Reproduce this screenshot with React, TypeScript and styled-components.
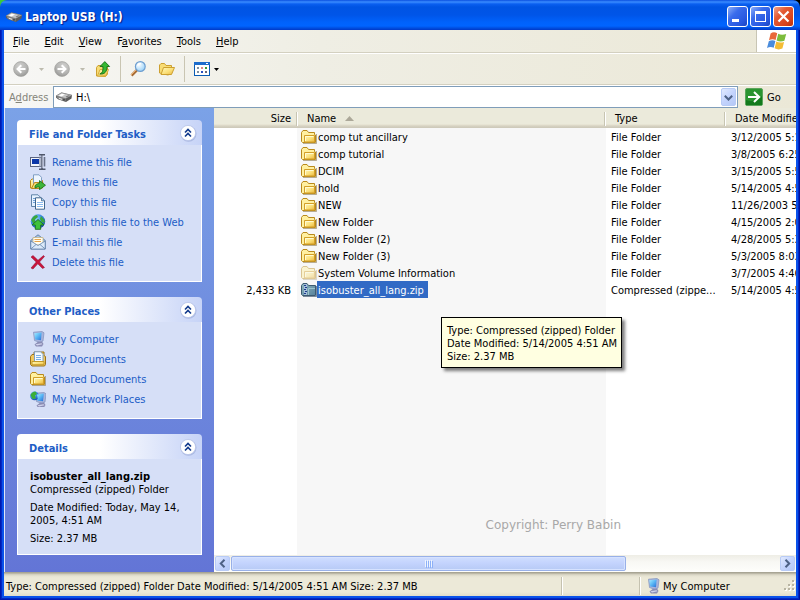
import React from 'react';
import styled, { createGlobalStyle, css } from 'styled-components';

const GlobalStyle = createGlobalStyle`
  * { box-sizing: border-box; }
  html, body { margin: 0; padding: 0; }
  body {
    background: linear-gradient(90deg, #3cc83c 50%, #000 50%);
    font-family: "DejaVu Sans Condensed", "DejaVu Sans", Tahoma, sans-serif;
    font-size: 11px;
    line-height: 13px;
    color: #000;
    overflow: hidden;
  }
  button, input { font: inherit; color: inherit; margin: 0; padding: 0; border: 0; background: none; }
  button { display: flex; align-items: center; justify-content: center; }
  a { text-decoration: none; }
  svg { display: block; flex: none; }
  p, h1, h2, ul { margin: 0; padding: 0; }
`;

/* ---------- Icons ---------- */

const DefsSvg = styled.svg`
  position: absolute;
`;

const Defs = () => (
  <DefsSvg width="0" height="0" aria-hidden="true">
    <defs>
      <linearGradient id="gFolder" x1="0" y1="0" x2="1" y2="1">
        <stop offset="0" stopColor="#fff8b8" />
        <stop offset=".55" stopColor="#fbe07a" />
        <stop offset="1" stopColor="#e9b53c" />
      </linearGradient>
      <linearGradient id="gZip" x1="0" y1="0" x2="1" y2="1">
        <stop offset="0" stopColor="#8fb8c0" />
        <stop offset="1" stopColor="#56809a" />
      </linearGradient>
      <linearGradient id="gScreen" x1="0" y1="0" x2="1" y2="1">
        <stop offset="0" stopColor="#a6ecff" />
        <stop offset=".5" stopColor="#58b6f4" />
        <stop offset="1" stopColor="#2a6fd8" />
      </linearGradient>
      <radialGradient id="gNav" cx=".4" cy=".3" r=".8">
        <stop offset="0" stopColor="#d0d0ce" />
        <stop offset=".6" stopColor="#b4b4b2" />
        <stop offset="1" stopColor="#8f8f8d" />
      </radialGradient>
      <radialGradient id="gGlobe" cx=".35" cy=".3" r=".8">
        <stop offset="0" stopColor="#8fd4ff" />
        <stop offset=".6" stopColor="#2f7fe0" />
        <stop offset="1" stopColor="#143c9c" />
      </radialGradient>
      <radialGradient id="gLens" cx=".35" cy=".3" r=".8">
        <stop offset="0" stopColor="#fff" />
        <stop offset="1" stopColor="#8fcdf8" />
      </radialGradient>
    </defs>
  </DefsSvg>
);

const Icon = ({ size = 16, children }: { size?: number; children: React.ReactNode }) => (
  <svg width={size} height={size} viewBox="0 0 16 16" aria-hidden="true">{children}</svg>
);

const DriveIcon = () => (
  <Icon>
    <path d="M0 6.8 L5.5 3.5 L16 6 L15.5 9.5 L10 13 L2 10.3 L0 8.5Z" fill="#5c5c5c" />
    <path d="M0.3 6.8 L5.5 3.8 L15.6 6.2 L9.5 9.4Z" fill="#c6c6c6" stroke="#8a8a8a" strokeWidth=".5" />
    <path d="M0.5 7.3 L9.5 10 V12.4 L2 10Z" fill="#8a8a8a" />
    <path d="M2.5 6.6 L6 4.8 L9 5.6 L5.5 7.6Z" fill="#fff" />
    <path d="M9.5 7.6 L12.5 6.2 L14 6.6 L11 8.2Z" fill="#787878" />
    <path d="M3 9.3 L6 10.3" stroke="#e8e8e8" />
    <rect x="7" y="10.4" width="2" height="1" fill="#2a2a2a" />
  </Icon>
);

const FolderShape = () => (
  <>
    <path d="M2 14.5 H15.5 V5" fill="none" stroke="#8c7a50" strokeOpacity=".6" />
    <path d="M.5 12.5 V3.5 L2 1.5 H6 L7.5 3.5 H13.5 V5.5 L14.5 6 V13.5 H1.5Z" fill="#fff0a0" stroke="#b98a1c" />
    <path d="M3.5 13 V6.5 H13.5 V13Z" fill="url(#gFolder)" stroke="#d39f28" />
    <path d="M4.5 12 V7.5 H12.5" fill="none" stroke="#fffbd0" />
  </>
);
const FolderIcon = ({ faded }: { faded?: boolean }) => (
  <Icon><g opacity={faded ? 0.45 : 1}><FolderShape /></g></Icon>
);

const ZipIcon = () => (
  <Icon>
    <path d="M15.5 4 V14.5 H2" fill="none" stroke="#25405c" strokeOpacity=".6" />
    <path d="M.5 12.5 V3.5 L2 1.5 H6 L7.5 3.5 H14.5 V13.5 H1.5Z" fill="url(#gZip)" stroke="#3c5a70" />
    <path d="M7.5 13 V6.5 H14" fill="none" stroke="#9cc4cc" />
    <rect x="3" y="2" width="3" height="11" fill="#a8c0dc" />
    <path d="M3 3.5 H5 M4 5.5 H6 M3 7.5 H5 M4 9.5 H6 M3 11.5 H5" stroke="#1c3c8c" />
  </Icon>
);

const NavIcon = ({ flip }: { flip?: boolean }) => (
  <Icon>
    <g transform={flip ? 'translate(16 0) scale(-1 1)' : undefined}>
      <circle cx="8" cy="8" r="7.4" fill="url(#gNav)" stroke="#a0a09e" strokeWidth=".7" />
      <path d="M12.5 8 H5 M8.3 4.2 L4.5 8 L8.3 11.8" stroke="#fff" strokeWidth="2" fill="none" />
    </g>
  </Icon>
);

const UpIcon = () => (
  <Icon>
    <path d="M1.5 15 V6.5 L3 4.5 H6 L7.5 6.5 H12.5 V13 L10.5 15.5Z" fill="#f8dc74" stroke="#cda030" />
    <path d="M2.5 15 L5 8.5 H13.5 L11 15Z" fill="url(#gFolder)" stroke="#d8ac3c" />
    <path d="M4.8 13 C7.8 12.2 8 9.5 8 5.5 H5 L9.8 .6 L14.6 5.5 H12 C12 10.5 9.8 13.6 4.8 13Z" fill="#35b832" stroke="#176e17" strokeWidth=".9" />
  </Icon>
);

const SearchIcon = () => (
  <Icon>
    <path d="M1.5 14.5 L7 9" stroke="#a66a34" strokeWidth="2.6" />
    <path d="M1 14 L6.5 8.6" stroke="#f0b878" strokeWidth="1" />
    <circle cx="10.3" cy="5.5" r="4.9" fill="url(#gLens)" stroke="#6f9fd0" strokeWidth="1.2" />
    <path d="M7.5 4.5 Q9 2.3 11 2.8" stroke="#fff" strokeWidth="1.2" fill="none" />
  </Icon>
);

const OpenFolderIcon = () => (
  <Icon>
    <path d="M.5 12 V4 L2 2.5 H5.5 L7 4.5 H12.5 V7 L12 12.5 L9 14Z" fill="#f8dc74" stroke="#cda030" />
    <path d="M2 13.5 L4.5 6.5 H15.5 L12.5 13.5Z" fill="url(#gFolder)" stroke="#cda030" />
  </Icon>
);

const ViewsIcon = () => (
  <Icon>
    <rect x=".5" y="1.5" width="15" height="13" fill="#fff" stroke="#0a5cb4" />
    <rect x="0" y="1" width="16" height="3" fill="#1c6ccc" />
    <path d="M12 2.5 H14" stroke="#fff" />
    <path d="M3 7 H5 M3 11 H5" stroke="#7f8f9f" strokeWidth="2" />
    <path d="M7 7 H9" stroke="#d88" strokeWidth="2" />
    <path d="M7 11 H9" stroke="#2a50c0" strokeWidth="2" />
    <path d="M11 7 H13" stroke="#3a9c3a" strokeWidth="2" />
    <path d="M11 11 H13" stroke="#667" strokeWidth="2" />
  </Icon>
);

const WindowsFlag = () => (
  <svg width="20" height="20" viewBox="0 0 20 20" aria-hidden="true">
    <path d="M3.6 2.6 Q6.5 .2 10.2 2.2 L8.6 9 Q5.4 7.2 2 9.2Z" fill="#e8683a" />
    <path d="M11.2 2.7 Q14.6 4.8 19.2 3 L17.4 9.8 Q13.2 11.4 9.6 9.5Z" fill="#7cbc3c" />
    <path d="M1.8 10.3 Q5.4 8.4 8.4 10.1 L6.7 16.8 Q3.6 15 0 16.9Z" fill="#4a8cdc" />
    <path d="M9.3 10.6 Q13 12.4 17.1 10.9 L15.4 17.6 Q11.4 19.4 7.6 17.3Z" fill="#f4bc34" />
  </svg>
);

const RenameIcon = () => (
  <Icon>
    <rect x=".5" y="3.5" width="11" height="9" fill="#f0f4fc" stroke="#5a6480" />
    <rect x="2" y="5" width="7" height="5" fill="#0a36a8" />
    <path d="M9 .8 H15 M12 1 V15 M9 15.2 H15.5" stroke="#4e566a" strokeWidth="1.6" />
    <path d="M10 2.5 V13" stroke="#8890a8" strokeWidth="1.2" />
    <path d="M12.2 1.5 V14" stroke="#d0d6e6" strokeWidth=".8" />
    <path d="M14.5 3 V12.5" stroke="#6a7288" strokeWidth="1.6" />
  </Icon>
);

const MoveIcon = () => (
  <Icon>
    <path d="M.5 14 V6.5 L2 5 H5 L6 6.5 H12.5 V14Z" fill="url(#gFolder)" stroke="#b98a1c" />
    <path d="M3.5 10 V.8 H9 L11.5 3.3 V10Z" fill="#eef6ff" stroke="#7f9fc4" />
    <path d="M1.5 14.5 L4.5 8.5 H13 L11 14.5Z" fill="#f8dc74" stroke="#b98a1c" />
    <path d="M5 12 Q6 9.5 9.5 9.4 V6.6 L15.5 11.2 L9.5 15.7 V13 Q7.5 12.6 5 14Z" fill="#3db53a" stroke="#176e17" strokeWidth=".8" />
  </Icon>
);

const CopyIcon = () => (
  <Icon>
    <path d="M1.5 .8 H8 L10.5 3.3 V12.5 H1.5Z" fill="#e6f2ff" stroke="#5f83a8" />
    <path d="M3 4.5 H5 M3 6.5 H5 M3 8.5 H5" stroke="#6fa0d8" />
    <path d="M5.5 3.8 H11.5 L14.5 6.8 V15.2 H5.5Z" fill="#fff" stroke="#40668c" />
    <path d="M7 8.5 H13 M7 10.5 H13 M7 12.5 H13" stroke="#8cbcf0" />
    <path d="M11.5 3.8 V6.8 H14.5" fill="#a8ccf0" stroke="#40668c" strokeWidth=".8" />
  </Icon>
);

const PublishIcon = () => (
  <Icon>
    <circle cx="8" cy="7.5" r="7.2" fill="url(#gGlobe)" />
    <path d="M1.2 6 Q3 1.5 7 1 L8 3 L5 5.5 L5.5 8 L3 9.5Z M11 2 L14.5 6 L14.8 9 L11.5 8 L10 5Z" fill="#3ca83c" />
    <path d="M8 5.5 L14 11 H10.7 V15.3 H5.3 V11 H2Z" fill="#3fc23a" stroke="#187018" strokeWidth=".9" />
  </Icon>
);

const MailIcon = () => (
  <Icon>
    <path d="M.7 6.5 L8 .8 L15.3 6.5 V15 H.7Z" fill="#a9c4e4" stroke="#6484ac" />
    <path d="M3 3.5 H13 V11 H3Z" fill="#fffdf0" stroke="#c0b080" strokeWidth=".7" />
    <path d="M4.5 5.5 H11 M4.5 7.5 H11" stroke="#e8a44c" />
    <path d="M.8 7 L8 11.5 L15.2 7 V15 H.8Z" fill="#dceafa" stroke="#6484ac" strokeWidth=".8" />
    <path d="M1 14.8 L6 10.5 M15 14.8 L10 10.5" stroke="#6484ac" strokeWidth=".8" />
  </Icon>
);

const DeleteIcon = () => (
  <Icon>
    <path d="M1 3 L3 1.5 L8 6.3 L13.5 1.5 L14.5 2.5 L9.5 8 L14.5 13.5 L12.5 14.5 L7.8 9.8 L3 15 L1 14 L6.2 8Z" fill="#c8143c" stroke="#8c0c2c" strokeWidth=".5" />
  </Icon>
);

const ComputerShape = () => (
  <>
    <path d="M3.5 1.2 L12 .5 L14 1.8 L13 10 L10 11.5 L4.5 9.5Z" fill="#a8b4dc" stroke="#8090bc" strokeWidth=".7" />
    <path d="M4.3 2.2 L11.6 1.6 L11 9.2 L5.2 8.5Z" fill="url(#gScreen)" />
    <path d="M8 10.8 L12 10.5 L13.5 13 L12 15.5 H6 L4.5 13.5Z" fill="#8a8cb4" />
    <path d="M5.5 13.3 L11.5 12.3 L12.5 13.3 L7 14.6Z" fill="#d0d2ec" />
  </>
);
const ComputerIcon = () => <Icon><ComputerShape /></Icon>;

const DocumentsIcon = () => (
  <Icon>
    <path d="M.5 13.5 V5.5 L2 3.5 H4 V1 H14 V4.5 L15.5 5.5 V13.5 L14.5 15 H2Z" fill="#f0c860" stroke="#9c741c" />
    <path d="M4.5 11 V.8 H10.5 L13 3.3 V11Z" fill="#f4faff" stroke="#7f9fc4" />
    <path d="M6 4.5 H11 M6 6.5 H11 M6 8.5 H11" stroke="#7ab0e8" />
    <path d="M2 10.5 H14 V13.8 H2Z" fill="url(#gFolder)" stroke="#c29a2a" />
  </Icon>
);

const NetworkIcon = () => (
  <Icon>
    <g transform="translate(2 1)"><ComputerShape /></g>
    <circle cx="4.5" cy="4.8" r="4.4" fill="url(#gGlobe)" />
    <path d="M.5 4 Q2 .8 5.5 .5 L7 3 L5 4.5 L6 7.5 L2.5 8Z" fill="#3cae38" />
    <path d="M7 3.5 L13.5 3 L13 10 L8 9.5Z" fill="url(#gScreen)" />
  </Icon>
);

const GoIcon = () => (
  <svg width="18" height="18" viewBox="0 0 18 18" aria-hidden="true">
    <rect x=".5" y=".5" width="17" height="17" rx="1.5" fill="#2a9430" stroke="#5aa45c" />
    <path d="M1 17 H17 V8 Q10 15 1 12Z" fill="#137a1c" />
    <path d="M3 9 H14 M9 4 L14.2 9 L9 14" fill="none" stroke="#fff" strokeWidth="2" />
  </svg>
);

const ChevronUpDouble = () => (
  <svg width="18" height="18" viewBox="0 0 18 18" aria-hidden="true">
    <circle cx="9.5" cy="9.8" r="8" fill="#8c9cd0" fillOpacity=".5" />
    <circle cx="9" cy="9" r="7.6" fill="#fff" stroke="#b8c4e8" strokeWidth=".8" />
    <path d="M6 8.5 L9 5.5 L12 8.5 M6 12.5 L9 9.5 L12 12.5" fill="none" stroke="#123a8c" strokeWidth="1.6" />
  </svg>
);

const Chevron = ({ dir }: { dir: 'left' | 'right' | 'down' }) => (
  <svg width="9" height="9" viewBox="0 0 9 9" aria-hidden="true">
    <path
      d={{ left: 'M6.5 .8 L2.8 4.5 L6.5 8.2', right: 'M2.5 .8 L6.2 4.5 L2.5 8.2', down: 'M.8 2.8 L4.5 6.5 L8.2 2.8' }[dir]}
      fill="none" stroke="#4d6185" strokeWidth="2"
    />
  </svg>
);

const Caret = ({ color }: { color: string }) => (
  <svg width="5" height="3" viewBox="0 0 5 3" aria-hidden="true"><path d="M0 0 H5 L2.5 3Z" fill={color} /></svg>
);

/* ---------- Window frame ---------- */

const Window = styled.div`
  display: flex;
  flex-direction: column;
  height: 100vh;
  border-radius: 7px 7px 0 0;
  overflow: hidden;
`;

const TitleBar = styled.header`
  display: flex;
  align-items: center;
  gap: 3px;
  height: 30px;
  flex: none;
  padding: 3px 6px 0 6px;
  background: linear-gradient(#0a4fe0 0, #3a8cff 2px, #0a5ff0 4px, #0054e3 7px, #0055e8 15px, #0062fb 22px, #0064ff 26px, #004fe0 28px, #0038c8 30px);
`;

const Title = styled.h1`
  flex: 1;
  font-size: 12px;
  line-height: 16px;
  font-weight: 700;
  color: #fff;
  text-shadow: 1px 1px 1px #0a1883;
`;

const CaptionButtons = styled.div`
  display: flex;
  gap: 2px;
`;

const CaptionButton = styled.button<{ $close?: boolean }>`
  width: 21px;
  height: 21px;
  border: 1px solid #fff;
  border-radius: 3px;
  background: ${p => p.$close
    ? 'linear-gradient(135deg, #f0a48c 0, #e35a34 35%, #d9431c 75%, #b8320c 100%)'
    : 'linear-gradient(135deg, #8caef8 0, #3a6cec 35%, #2858e0 75%, #1a44c0 100%)'};
`;

const Body = styled.div`
  display: flex;
  flex-direction: column;
  flex: 1;
  min-height: 0;
  padding: 0 4px 4px;
  background: #0a52ea;
  box-shadow: inset 1px -1px #0019b0, inset -1px -1px #00129c, inset 2px -2px #0228c4, inset -2px -2px #0228c4;
`;

/* ---------- Bars ---------- */

const Bar = styled.div`
  display: flex;
  align-items: center;
  flex: none;
  background: linear-gradient(90deg, #f7f7f5, #efeee4 40%, #ebe8d7);
`;

const MenuBar = styled(Bar)`
  height: 23px;
  border-bottom: 1px solid #d3d0c0;
`;

const Menu = styled.nav`
  display: flex;
  flex: 1;
  gap: 15px;
  padding-left: 9px;
`;

const MenuButton = styled.button`
  white-space: nowrap;
  u { text-underline-offset: 1px; }
`;

const LogoBox = styled.div`
  display: flex;
  align-items: center;
  justify-content: center;
  width: 40px;
  align-self: stretch;
  background: #fff;
  border-left: 1px solid #c8c5b4;
`;

const ToolBar = styled(Bar)`
  height: 32px;
  padding-left: 9px;
  border-top: 1px solid #fff;
  border-bottom: 1px solid #d3d0c0;
`;

const ToolGroup = styled.div<{ $gap: number }>`
  display: flex;
  align-items: center;
  gap: ${p => p.$gap}px;
  padding-right: 9px;
  & + & { border-left: 1px solid #c9c5b2; padding-left: 9px; height: 26px; }
`;

const ToolButton = styled.button`
  height: 22px;
`;

const CaretButton = styled.button`
  width: 7px;
  height: 22px;
`;

const AddressBar = styled(Bar)`
  height: 23px;
  border-top: 1px solid #fff;
`;

const AddressLabel = styled.label`
  width: 49px;
  padding-left: 5px;
  color: #85857a;
`;

const Combo = styled.div`
  display: flex;
  align-items: center;
  flex: 1;
  height: 22px;
  padding: 0 1px 0 2px;
  background: #fff;
  border: 1px solid #7f9db9;
`;

const AddressInput = styled.input`
  flex: 1;
  min-width: 0;
  height: 18px;
  padding-left: 4px;
  outline: none;
`;

const BlueButton = styled.button`
  width: 15px;
  height: 18px;
  flex: none;
  border: 1px solid #b8cbf6;
  border-radius: 2px;
  background: linear-gradient(135deg, #e1eafe, #c3d3fd 50%, #b4c8f6);
`;

const GoButton = styled.button`
  width: 58px;
  padding-left: 7px;
  gap: 4px;
  justify-content: flex-start;
`;

/* ---------- Content ---------- */

const Content = styled.div`
  display: flex;
  flex: 1;
  min-height: 0;
  border-left: 1px solid #dfe6f8;
  background: #fff;
`;

const Sidebar = styled.aside`
  display: flex;
  flex-direction: column;
  gap: 15px;
  width: 209px;
  flex: none;
  padding: 12px;
  background: linear-gradient(#7ba2e7, #6375d6);
`;

const Panel = styled.section`
  border-radius: 4px 4px 0 0;
  overflow: hidden;
  flex: none;
`;

const PanelHead = styled.div`
  display: flex;
  align-items: center;
  height: 25px;
  padding: 0 5px 0 12px;
  background: linear-gradient(90deg, #fff 45%, #c6d3f7);
`;

const PanelTitle = styled.h2`
  flex: 1;
  font-size: 11px;
  line-height: 13px;
  font-weight: 700;
  padding-top: 3px;
  color: #215dc6;
`;

const PanelToggle = styled.button`
  height: 20px;
`;

const PanelBody = styled.div`
  border: 1px solid #fff;
  border-top: 0;
  background: #d6dff7;
  padding: 7px 0 9px 12px;
`;

const LinkList = styled.ul`
  list-style: none;
`;

const TaskLink = styled.a`
  display: flex;
  align-items: center;
  gap: 6px;
  height: 20px;
  color: #215dc6;
  white-space: nowrap;
`;

const DetailsBody = styled(PanelBody)`
  display: flex;
  flex-direction: column;
  gap: 5px;
  padding-top: 11px;
`;

const Listing = styled.main`
  position: relative;
  display: flex;
  flex-direction: column;
  flex: 1;
  min-width: 0;
`;

const TableArea = styled.div`
  flex: 1;
  min-height: 0;
  overflow: hidden;
  background: linear-gradient(90deg, #fff 83px, #f7f7f7 83px, #f7f7f7 392px, #fff 392px);
`;

const FileTable = styled.table`
  width: 100%;
  table-layout: fixed;
  border-collapse: collapse;
`;

const Col = styled.col<{ $width?: number }>`
  ${p => p.$width && css`width: ${p.$width}px;`}
`;

const HeadRow = styled.tr`
  height: 20px;
  background: linear-gradient(#ebeadb 16px, #e2decd 17px, #d6d2c2 18px, #cbc7b8 20px);
`;

const HeadCell = styled.th`
  padding: 1px 0 0;
  font-weight: 400;
  white-space: nowrap;
  overflow: hidden;
`;

const HeadLabel = styled.span<{ $right?: boolean }>`
  display: flex;
  align-items: center;
  justify-content: ${p => (p.$right ? 'flex-end' : 'flex-start')};
  gap: 9px;
  height: 14px;
  padding: 0 5px 0 10px;
  ${p => !p.$right && css`
    border-left: 1px solid #c7c5b2;
    box-shadow: inset 1px 0 #fff;
  `}
`;

const Row = styled.tr`
  height: 17px;
`;

const Cell = styled.td<{ $right?: boolean }>`
  padding: 2px ${p => (p.$right ? 5 : 0)}px 0 7px;
  text-align: ${p => (p.$right ? 'right' : 'left')};
  white-space: nowrap;
  overflow: hidden;
`;

const NameCell = styled(Cell)`
  padding: 0 0 0 5px;
`;

const FileName = styled.div`
  display: flex;
  align-items: center;
`;

const FileLabel = styled.span<{ $selected?: boolean }>`
  line-height: 15px;
  padding: 2px 4px 0 1px;
  ${p => p.$selected && css`
    background: #316ac5;
    color: #fff;
  `}
`;

const Tooltip = styled.div`
  position: absolute;
  left: 227px;
  top: 209px;
  padding: 6px 4px 4px 5px;
  white-space: nowrap;
  color: #000;
  background: #ffffe1;
  border: 1px solid #000;
  box-shadow: 3px 3px 3px rgba(0, 0, 0, .5);
`;

const Copyright = styled.p`
  position: absolute;
  right: 175px;
  bottom: 39px;
  font-family: "DejaVu Sans", Verdana, sans-serif;
  font-size: 12px;
  line-height: 15px;
  color: #a8a8a8;
`;

const ScrollBar = styled.div`
  display: flex;
  align-items: center;
  gap: 1px;
  height: 17px;
  flex: none;
  padding: 0 1px;
  background: linear-gradient(#eeede5, #f8f8f4 40%, #fefefb);
`;

const ScrollButton = styled(BlueButton)`
  height: 15px;
`;

const Track = styled.div`
  display: flex;
  flex: 1;
`;

const Thumb = styled.div`
  display: flex;
  align-items: center;
  justify-content: center;
  gap: 1px;
  width: 72%;
  height: 15px;
  border: 1px solid #98b0e8;
  border-radius: 2px;
  background: linear-gradient(#d0deff, #c3d3fd 50%, #b7caf5);
  box-shadow: inset 0 0 0 1px #d6e2ff;
`;

const Grip = styled.i`
  width: 1px;
  height: 7px;
  background: #eef4fe;
  box-shadow: 1px 1px #8cb0f8;
`;

/* ---------- Status bar ---------- */

const StatusBar = styled.footer`
  display: flex;
  align-items: center;
  height: 24px;
  flex: none;
  padding-top: 4px;
  background: linear-gradient(#a8a594 1px, #cfcbba 2px, #e6e3d2 4px, #ece9d8 6px, #ece9d8 20px, #e0dcca);
`;

const StatusText = styled.span`
  flex: 1;
  padding-left: 2px;
  white-space: nowrap;
`;

const StatusCell = styled.span<{ $width: number }>`
  display: flex;
  align-items: center;
  gap: 2px;
  width: ${p => p.$width}px;
  height: 18px;
  padding-left: 5px;
  border-left: 1px solid #c5c2b0;
  box-shadow: inset 1px 0 #fff;
`;

const ResizeGrip = () => (
  <svg width="12" height="12" viewBox="0 0 12 12" aria-hidden="true">
    {[[8, 0], [4, 4], [8, 4], [0, 8], [4, 8], [8, 8]].map(([x, y]) => (
      <g key={`${x}-${y}`}>
        <rect x={x + 1} y={y + 1} width="2" height="2" fill="#fff" />
        <rect x={x} y={y} width="2" height="2" fill="#b8b4a2" />
      </g>
    ))}
  </svg>
);

/* ---------- Data ---------- */

const menus: [string, string, string][] = [
  ['', 'F', 'ile'], ['', 'E', 'dit'], ['', 'V', 'iew'], ['F', 'a', 'vorites'], ['', 'T', 'ools'], ['', 'H', 'elp'],
];

const tasks = [
  { label: 'Rename this file', icon: <RenameIcon /> },
  { label: 'Move this file', icon: <MoveIcon /> },
  { label: 'Copy this file', icon: <CopyIcon /> },
  { label: 'Publish this file to the Web', icon: <PublishIcon /> },
  { label: 'E-mail this file', icon: <MailIcon /> },
  { label: 'Delete this file', icon: <DeleteIcon /> },
];

const places = [
  { label: 'My Computer', icon: <ComputerIcon /> },
  { label: 'My Documents', icon: <DocumentsIcon /> },
  { label: 'Shared Documents', icon: <FolderIcon /> },
  { label: 'My Network Places', icon: <NetworkIcon /> },
];

type FileRow = { name: string; date: string; size?: string; type?: string; kind?: 'hidden' | 'zip' };
const files: FileRow[] = [
  { name: 'comp tut ancillary', date: '3/12/2005 5:1' },
  { name: 'comp tutorial', date: '3/8/2005 6:25' },
  { name: 'DCIM', date: '3/15/2005 5:5' },
  { name: 'hold', date: '5/14/2005 4:5' },
  { name: 'NEW', date: '11/26/2003 5:' },
  { name: 'New Folder', date: '4/15/2005 2:0' },
  { name: 'New Folder (2)', date: '4/28/2005 5:3' },
  { name: 'New Folder (3)', date: '5/3/2005 8:03' },
  { name: 'System Volume Information', date: '3/7/2005 4:46', kind: 'hidden' },
  { name: 'isobuster_all_lang.zip', date: '5/14/2005 4:5', size: '2,433 KB', type: 'Compressed (zippe...', kind: 'zip' },
];

const TaskPanel = ({ title, children }: { title: string; children: React.ReactNode }) => (
  <Panel>
    <PanelHead>
      <PanelTitle>{title}</PanelTitle>
      <PanelToggle aria-label={`Collapse ${title}`}><ChevronUpDouble /></PanelToggle>
    </PanelHead>
    {children}
  </Panel>
);

const Links = ({ items }: { items: { label: string; icon: React.ReactNode }[] }) => (
  <PanelBody>
    <LinkList>
      {items.map(i => (
        <li key={i.label}><TaskLink href="#">{i.icon}{i.label}</TaskLink></li>
      ))}
    </LinkList>
  </PanelBody>
);

export default function App() {
  return (
    <>
      <GlobalStyle />
      <Defs />
      <Window>
        <TitleBar>
          <DriveIcon />
          <Title>Laptop USB (H:)</Title>
          <CaptionButtons>
            <CaptionButton aria-label="Minimize">
              <svg width="13" height="13" viewBox="0 0 13 13"><rect x="1" y="9" width="7" height="3" fill="#fff" /></svg>
            </CaptionButton>
            <CaptionButton aria-label="Maximize">
              <svg width="13" height="13" viewBox="0 0 13 13"><path d="M1 1 H12 V12 H1Z M2 4 V11 H11 V4Z" fill="#fff" fillRule="evenodd" /></svg>
            </CaptionButton>
            <CaptionButton $close aria-label="Close">
              <svg width="13" height="13" viewBox="0 0 13 13"><path d="M1.5 1.5 L11.5 11.5 M11.5 1.5 L1.5 11.5" stroke="#fff" strokeWidth="2.2" /></svg>
            </CaptionButton>
          </CaptionButtons>
        </TitleBar>
        <Body>
          <MenuBar>
            <Menu>
              {menus.map(([a, key, b]) => (
                <MenuButton key={a + key + b}><span>{a}<u>{key}</u>{b}</span></MenuButton>
              ))}
            </Menu>
            <LogoBox><WindowsFlag /></LogoBox>
          </MenuBar>
          <ToolBar>
            <ToolGroup $gap={9}>
              <ToolButton aria-label="Back"><NavIcon /></ToolButton>
              <CaretButton aria-label="Back history"><Caret color="#bdbbae" /></CaretButton>
              <ToolButton aria-label="Forward"><NavIcon flip /></ToolButton>
              <CaretButton aria-label="Forward history"><Caret color="#bdbbae" /></CaretButton>
              <ToolButton aria-label="Up"><UpIcon /></ToolButton>
            </ToolGroup>
            <ToolGroup $gap={13}>
              <ToolButton aria-label="Search"><SearchIcon /></ToolButton>
              <ToolButton aria-label="Folders"><OpenFolderIcon /></ToolButton>
            </ToolGroup>
            <ToolGroup $gap={3}>
              <ToolButton aria-label="Views"><ViewsIcon /></ToolButton>
              <CaretButton aria-label="Choose view"><Caret color="#000" /></CaretButton>
            </ToolGroup>
          </ToolBar>
          <AddressBar>
            <AddressLabel htmlFor="address">A<u>d</u>dress</AddressLabel>
            <Combo>
              <DriveIcon />
              <AddressInput id="address" type="text" defaultValue="H:\" />
              <BlueButton aria-label="Show addresses"><Chevron dir="down" /></BlueButton>
            </Combo>
            <GoButton><GoIcon />Go</GoButton>
          </AddressBar>
          <Content>
            <Sidebar>
              <TaskPanel title="File and Folder Tasks"><Links items={tasks} /></TaskPanel>
              <TaskPanel title="Other Places"><Links items={places} /></TaskPanel>
              <TaskPanel title="Details">
                <DetailsBody>
                  <p><strong>isobuster_all_lang.zip</strong><br />Compressed (zipped) Folder</p>
                  <p>Date Modified: Today, May 14, 2005, 4:51 AM</p>
                  <p>Size: 2.37 MB</p>
                </DetailsBody>
              </TaskPanel>
            </Sidebar>
            <Listing>
              <TableArea>
                <FileTable>
                  <colgroup>
                    <Col $width={82} /><Col $width={308} /><Col $width={120} /><Col />
                  </colgroup>
                  <thead>
                    <HeadRow>
                      <HeadCell scope="col"><HeadLabel $right>Size</HeadLabel></HeadCell>
                      <HeadCell scope="col">
                        <HeadLabel>
                          Name
                          <svg width="9" height="5" viewBox="0 0 9 5" aria-hidden="true"><path d="M4.5 0 L9 5 H0Z" fill="#aca899" /></svg>
                        </HeadLabel>
                      </HeadCell>
                      <HeadCell scope="col"><HeadLabel>Type</HeadLabel></HeadCell>
                      <HeadCell scope="col"><HeadLabel>Date Modified</HeadLabel></HeadCell>
                    </HeadRow>
                  </thead>
                  <tbody>
                    {files.map(f => (
                      <Row key={f.name}>
                        <Cell $right>{f.size}</Cell>
                        <NameCell>
                          <FileName>
                            {f.kind === 'zip' ? <ZipIcon /> : <FolderIcon faded={f.kind === 'hidden'} />}
                            <FileLabel $selected={f.kind === 'zip'}>{f.name}</FileLabel>
                          </FileName>
                        </NameCell>
                        <Cell>{f.type ?? 'File Folder'}</Cell>
                        <Cell>{f.date}</Cell>
                      </Row>
                    ))}
                  </tbody>
                </FileTable>
              </TableArea>
              <ScrollBar>
                <ScrollButton aria-label="Scroll left"><Chevron dir="left" /></ScrollButton>
                <Track><Thumb><Grip /><Grip /><Grip /><Grip /></Thumb></Track>
                <ScrollButton aria-label="Scroll right"><Chevron dir="right" /></ScrollButton>
              </ScrollBar>
              <Copyright>Copyright: Perry Babin</Copyright>
              <Tooltip role="tooltip">
                <p>Type: Compressed (zipped) Folder</p>
                <p>Date Modified: 5/14/2005 4:51 AM</p>
                <p>Size: 2.37 MB</p>
              </Tooltip>
            </Listing>
          </Content>
          <StatusBar>
            <StatusText>Type: Compressed (zipped) Folder Date Modified: 5/14/2005 4:51 AM Size: 2.37 MB</StatusText>
            <StatusCell $width={78} />
            <StatusCell $width={145}><ComputerIcon />My Computer</StatusCell>
            <ResizeGrip />
          </StatusBar>
        </Body>
      </Window>
    </>
  );
}
